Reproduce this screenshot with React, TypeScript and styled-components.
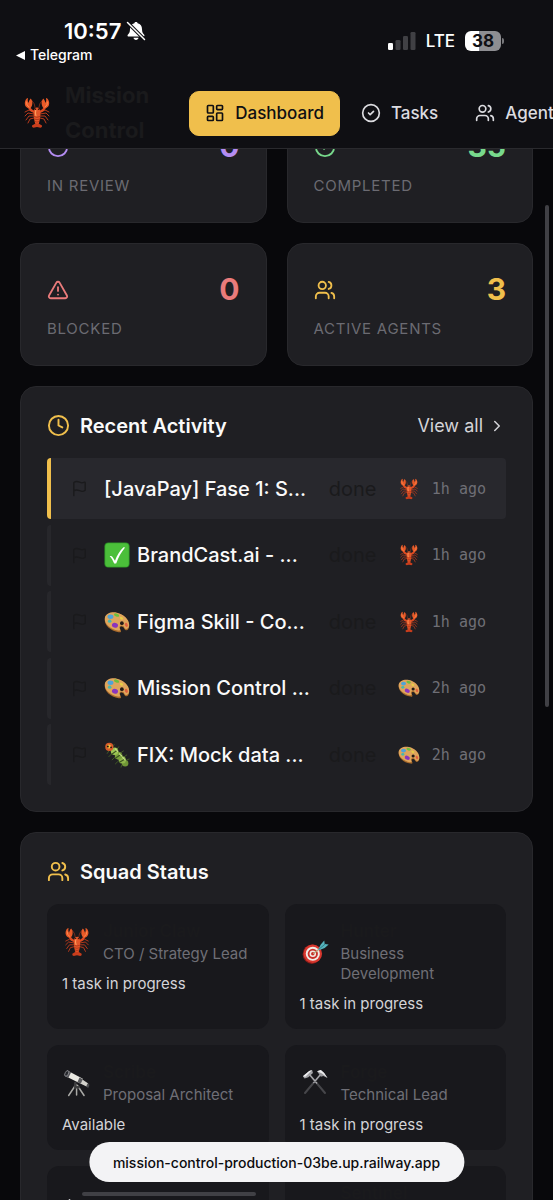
import React from "react";
import styled, { createGlobalStyle } from "styled-components";
import {
  ChevronRight,
  Circle,
  CircleCheck,
  Clock,
  Flag,
  LayoutDashboard,
  TriangleAlert,
  Users,
} from "lucide-react";

const GlobalStyle = createGlobalStyle`
  *, *::before, *::after { box-sizing: border-box; }
  body {
    margin: 0;
    background: #08080b;
    color: #fafafa;
    font-family: Inter, "Liberation Sans", sans-serif;
    -webkit-font-smoothing: antialiased;
  }
  h1, h2, h3, p, ul { margin: 0; padding: 0; }
  ul { list-style: none; }
  svg { display: block; flex: none; }
`;

const ink = "#1a1a1c";
const gold = "#f0bf4c";

/* ---------- shell ---------- */

const Shell = styled.div`
  height: 100vh;
  overflow: hidden;
`;

const Main = styled.main`
  display: flex;
  flex-direction: column;
  gap: 20px;
  padding: 100px 20px 0;
`;

const TopBar = styled.header`
  position: fixed;
  inset: 0 0 auto 0;
  z-index: 2;
  overflow: hidden;
  background: #0f0f13;
  border-bottom: 1px solid #2a2a2e;
`;

/* ---------- phone status bar ---------- */

const StatusBar = styled.div`
  display: flex;
  justify-content: space-between;
  height: 78px;
  padding: 17px 49px 0 16px;
  color: #fff;
`;

const StatusLeft = styled.div`
  display: flex;
  flex-direction: column;
`;

const TimeRow = styled.div`
  display: flex;
  align-items: center;
  gap: 5px;
  padding-left: 48px;
  font-size: 22px;
  font-weight: 600;
  line-height: 28px;
`;

const BackLink = styled.a`
  display: flex;
  align-items: center;
  gap: 5px;
  color: inherit;
  font-size: 14px;
  font-weight: 500;
  line-height: 20px;
  text-decoration: none;
`;

const StatusRight = styled.div`
  display: flex;
  align-items: center;
  gap: 10px;
  height: 48px;
  font-size: 17px;
  font-weight: 500;
`;

const Battery = styled.div`
  display: flex;
  align-items: center;
  gap: 1px;
`;

const BatteryBody = styled.div`
  width: 36px;
  height: 20px;
  border-radius: 6px;
  background: linear-gradient(to right, #fff 38%, #8e8e92 38%);
  color: #0f0f13;
  font-size: 17px;
  font-weight: 700;
  line-height: 20px;
  text-align: center;
`;

const BatteryTip = styled.div`
  width: 2px;
  height: 6px;
  border-radius: 0 2px 2px 0;
  background: #77777b;
`;

/* ---------- navigation ---------- */

const NavRow = styled.div`
  display: flex;
  align-items: center;
  gap: 40px;
  padding-left: 21px;
`;

const Brand = styled.div`
  display: flex;
  align-items: center;
  gap: 12px;
`;

const BrandName = styled.h1`
  width: min-content;
  color: ${ink};
  font-size: 22px;
  font-weight: 700;
  line-height: 35px;
`;

const Nav = styled.nav`
  display: flex;
  gap: 5px;
`;

const NavButton = styled.button<{ $active?: boolean }>`
  display: flex;
  align-items: center;
  gap: 10px;
  height: 45px;
  padding: 0 15px;
  border: 1px solid ${(p) => (p.$active ? gold : "transparent")};
  border-radius: 10px;
  background: ${(p) => (p.$active ? gold : "transparent")};
  color: ${(p) => (p.$active ? "#0f0f13" : "#dcdce0")};
  font: inherit;
  font-size: 17px;
  font-weight: 500;
  white-space: nowrap;
`;

/* ---------- cards ---------- */

const Card = styled.section`
  padding: 26px;
  border: 1px solid #28282c;
  border-radius: 16px;
  background: #1f1f23;
`;

const StatGrid = styled.div`
  display: grid;
  grid-template-columns: 1fr 1fr;
  gap: 20px;
`;

const StatTop = styled.div<{ $color: string }>`
  display: flex;
  align-items: center;
  justify-content: space-between;
  margin-bottom: 10px;
  color: ${(p) => p.$color};
`;

const StatValue = styled.span`
  font-size: 30px;
  font-weight: 700;
  line-height: 39px;
`;

const StatLabel = styled.p`
  color: #6b6b72;
  font-size: 15px;
  letter-spacing: 0.05em;
  line-height: 20px;
  text-transform: uppercase;
`;

const CardHeader = styled.div`
  display: flex;
  align-items: center;
  gap: 10px;
  height: 25px;
  margin-bottom: 20px;
  color: ${gold};
`;

const CardTitle = styled.h2`
  flex: 1;
  color: #fafafa;
  font-size: 20px;
  font-weight: 600;
`;

const ViewAll = styled.a`
  display: flex;
  align-items: center;
  gap: 5px;
  color: #d4d4d8;
  font-size: 18px;
  text-decoration: none;
`;

/* ---------- activity ---------- */

const ActivityList = styled.ul`
  display: flex;
  flex-direction: column;
  justify-content: space-between;
  min-height: 327px;
`;

const ActivityRow = styled.li<{ $active?: boolean }>`
  display: flex;
  align-items: center;
  gap: 16px;
  height: 61px;
  padding: 0 20px;
  border-left: 4px solid ${(p) => (p.$active ? gold : "#27272b")};
  border-radius: 4px;
  background: ${(p) => (p.$active ? "#28282d" : "transparent")};
  color: ${ink};
`;

const ActivityTitle = styled.h3`
  display: flex;
  flex: 1;
  align-items: center;
  gap: 7px;
  min-width: 0;
  overflow: hidden;
  color: #fafafa;
  font-size: 20px;
  font-weight: 500;
  white-space: nowrap;
`;

const ActivityState = styled.span`
  width: 53px;
  font-size: 20px;
`;

const ActivityMeta = styled.div`
  display: flex;
  align-items: center;
  gap: 12px;
`;

const Ago = styled.span`
  color: #6f6f76;
  font-family: "DejaVu Sans Mono", monospace;
  font-size: 15px;
`;

/* ---------- squad ---------- */

const SquadGrid = styled.div`
  display: grid;
  grid-template-columns: 1fr 1fr;
  gap: 16px;
`;

const Member = styled.article`
  min-height: 105px;
  padding: 15px;
  border-radius: 12px;
  background: #18181c;
`;

const MemberTop = styled.div`
  display: flex;
  align-items: center;
  gap: 11px;
  min-height: 45px;
  margin-bottom: 10px;
`;

const MemberName = styled.h3`
  min-height: 25px;
  color: ${ink};
  font-size: 17px;
  font-weight: 600;
  line-height: 25px;
`;

const MemberRole = styled.p`
  min-height: 20px;
  color: #6f6f76;
  font-size: 15px;
  line-height: 20px;
`;

const MemberState = styled.p`
  color: #d4d4d8;
  font-size: 15px;
  line-height: 20px;
`;

/* ---------- overlays ---------- */

const AddressPill = styled.button`
  position: fixed;
  bottom: 18px;
  left: 50%;
  z-index: 3;
  height: 40px;
  padding: 0 24px;
  border: 0;
  border-radius: 20px;
  background: #f3f3f5;
  color: #0c0c0e;
  font: inherit;
  font-size: 14px;
  font-weight: 500;
  white-space: nowrap;
  transform: translateX(-50%);
`;

const ScrollThumb = styled.div<{ $axis: "x" | "y" }>`
  position: fixed;
  z-index: 1;
  border-radius: 2px;
  background: #404045;
  ${(p) =>
    p.$axis === "y"
      ? "right: 4px; top: 205px; width: 4px; height: 502px;"
      : "left: 82px; bottom: 4px; width: 174px; height: 4px;"}
`;

/* ---------- drawings ---------- */

type Size = { size: number };

const Lobster = ({ size }: Size) => (
  <svg width={size} height={size} viewBox="0 0 32 32" aria-hidden="true">
    <g fill="none" stroke="#b93a1c" strokeWidth="1" strokeLinecap="round">
      <path d="M13 15 8 13 4 15M13 17l-6-1-3 3M13 19l-5 0-3 4M13 21l-4 1-2 4" />
      <path d="m19 15 5-2 4 2M19 17l6-1 3 3M19 19l5 0 3 4M19 21l4 1 2 4" />
      <path d="M14.500 12Q14 6 10.500 3M17.500 12Q18 6 21.500 3" strokeWidth=".6" />
    </g>
    <path d="M14 15Q9 14 8 9.500M18 15q5-1 6-5.500" fill="none" stroke="#dc4a22" strokeWidth="2.400" strokeLinecap="round" />
    <path d="M8.500 11.500C4.500 11 3 7.500 4.200 4 4.800 2 6 1 7 1c-.4 2-.3 3.500.5 5C8 4.500 8.500 2.500 9.800 1.500c1.600 2 2 5 1.200 7-.5 1.500-1.200 2.700-2.500 3Z" fill="#e85a28" />
    <path d="M23.500 11.500c4-.5 5.500-4 4.300-7.500-.6-2-1.800-3-2.800-3 .4 2 .3 3.500-.5 5-.5-1.500-1-3.500-2.300-4.500-1.600 2-2 5-1.200 7 .5 1.500 1.200 2.700 2.500 3Z" fill="#e85a28" />
    <path d="M5.500 5q-.4 3.500 2.500 5M26.500 5q.4 3.500-2.500 5" fill="none" stroke="#ff9154" strokeWidth=".9" strokeLinecap="round" />
    <path d="M16 10.500c2 0 3.400 2.500 3.400 6 0 4-1 8.500-1.900 11h-3c-.9-2.500-1.900-7-1.900-11 0-3.500 1.400-6 3.400-6Z" fill="#e4572a" />
    <path d="M14.800 13q-.9 3 .2 6" fill="none" stroke="#ff9c5c" strokeWidth="1.200" strokeLinecap="round" />
    <path d="M13 19.500q3 1.500 6 0M13.200 22q2.800 1.400 5.600 0M13.800 24.500q2.200 1.200 4.400 0" fill="none" stroke="#a92f15" strokeWidth=".8" />
    <path d="M14.500 26.500 11 28.500q-.5 2 1.500 2.300L16 30l3.500.8q2-.3 1.500-2.300l-3.500-2Z" fill="#c83d1c" />
    <circle cx="14.500" cy="12.300" r=".7" fill="#2a0d08" />
    <circle cx="17.500" cy="12.300" r=".7" fill="#2a0d08" />
  </svg>
);

const Palette = ({ size }: Size) => (
  <svg width={size} height={size} viewBox="0 0 32 32" aria-hidden="true">
    <path d="M1 12C2 6 9 3.500 16 5c8 1.700 15 8.500 15 15.500 0 3.500-1.800 6-4 5.500-2.400-.6-2-4-4.800-4.300-3-.2-3 2.300-1.600 4.300 1.200 1.800-.1 3-2.600 2.500C8 27 0 20 1 12Z" fill="#a86a2c" />
    <path d="M1 11C2 5.500 9 3 16 4.500c8 1.700 15 8 15 15 0 3.500-1.800 5.500-4 5-2.400-.6-2-4-4.800-4.300-3-.2-4 2.300-2.600 4.300.9 1.500-.1 2.500-2.600 2C9 25 0 19 1 11Z" fill="#dfa55c" />
    <circle cx="22" cy="17.500" r="2.300" fill="#241a16" />
    <ellipse cx="8" cy="9.500" rx="3.600" ry="2.700" fill="#4fa3d8" />
    <ellipse cx="15.500" cy="7.500" rx="3.300" ry="1.900" transform="rotate(18 15.500 7.500)" fill="#6cbf3c" />
    <ellipse cx="21.500" cy="11.500" rx="2.200" ry="1.500" transform="rotate(35 21.500 11.500)" fill="#e6cf45" />
    <ellipse cx="7" cy="15" rx="2.200" ry="2" fill="#46b8ad" />
    <ellipse cx="13.500" cy="20" rx="3.800" ry="2.900" transform="rotate(20 13.500 20)" fill="#8a35bd" />
    <ellipse cx="27.500" cy="19.500" rx="1.700" ry="2.600" transform="rotate(-25 27.500 19.500)" fill="#e2603f" />
  </svg>
);

const CheckTile = ({ size }: Size) => (
  <svg width={size} height={size} viewBox="0 0 32 32" aria-hidden="true">
    <rect x=".5" y=".5" width="31" height="31" rx="5" fill="#2c9426" />
    <rect x="1.500" y="1.500" width="29" height="29" rx="4.500" fill="#4bbf3a" />
    <path d="M7 17.500c1.500-.8 2.700-.2 3.500 1l3 4.500C16 16.500 19.500 10.500 24 6.500l2 .2C21 12.500 17.500 19 15 26.500h-2.500C11 23 9.500 20 7 17.500Z" fill="#fff" />
  </svg>
);

const Caterpillar = ({ size }: Size) => (
  <svg width={size} height={size} viewBox="0 0 32 32" aria-hidden="true">
    <g stroke="#4d6e28" strokeWidth=".9" strokeLinecap="round">
      <path d="m11 6 1.500-3M16 9l2-3M21 13l3-2M25 18l3-2M28 22l3-1" />
      <path d="m6 11-2 3M9 15l-3 3M13 19l-3 3M17 24l-3 3M22 28l-1 3" />
    </g>
    <circle cx="26" cy="26" r="4" fill="#6f9636" />
    <circle cx="22.500" cy="22" r="4.500" fill="#8db54a" />
    <circle cx="18" cy="17" r="4.700" fill="#7ba23c" />
    <circle cx="13" cy="11.500" r="4.600" fill="#9cc455" />
    <path d="m14 20 7-5M19 25l7-4M9.500 15l7-5" stroke="#3b5420" strokeWidth="1.400" strokeLinecap="round" />
    <path d="m19 14.500 3 3M14 8.500l3 3M23 19l3 3" stroke="#cbe58b" strokeWidth="1.400" strokeLinecap="round" />
    <circle cx="6.500" cy="6" r="5" fill="#d75b2a" />
    <circle cx="6" cy="5.500" r="2.500" fill="#f3bf3d" />
    <circle cx="4.700" cy="5.500" r="1.200" fill="#1c120c" />
    <circle cx="8.700" cy="6.500" r="1.100" fill="#1c120c" />
  </svg>
);

const Target = ({ size }: Size) => (
  <svg width={size} height={size} viewBox="-1 -1 34 34" aria-hidden="true">
    <ellipse cx="12.500" cy="18.500" rx="10.500" ry="11" fill="#8f1d1a" />
    <ellipse cx="13.500" cy="18" rx="10.500" ry="10.500" fill="#d8372e" />
    <ellipse cx="13.500" cy="18" rx="8" ry="8" fill="#f1ebe6" />
    <ellipse cx="13.500" cy="18" rx="5.800" ry="5.800" fill="#c92f28" />
    <ellipse cx="13.500" cy="18" rx="3.700" ry="3.700" fill="#f1ebe6" />
    <circle cx="13.500" cy="18" r="2" fill="#c92f28" />
    <path d="m14 18 10-8" stroke="#b7a37a" strokeWidth="1.300" />
    <path d="m19.500 13.500 3-6L26.500 3l.5 4 4.500.5-4.500 4-6.500 2.500Z" fill="#55b3bd" />
    <path d="m20.500 12.800 7-5.800" stroke="#2c7580" strokeWidth="1" />
  </svg>
);

const Telescope = ({ size }: Size) => (
  <svg width={size} height={size} viewBox="-2 -2 36 36" aria-hidden="true">
    <g strokeLinecap="round" fill="none">
      <path d="m14 19-8 12M16.500 19l8 12M15.500 18v12.500" stroke="#a9a9a6" strokeWidth="1.800" />
      <path d="M14 16v5h4" stroke="#3e3e40" strokeWidth="3" />
    </g>
    <path d="M5.500 1.500 23 11l-2.500 6L2.500 8Z" fill="#e9e8e2" />
    <path d="m22 11.500 7.500 5-1.500 4-8-4Z" fill="#d2d1cb" />
    <path d="m28.500 16.500 2.500 1.500-1.500 4-2.500-1.500Z" fill="#4c4c4f" />
    <path d="m19 9.500 4 2-2.500 5.500-4-2Z" fill="#5a5a5d" />
    <path d="m4.500 1 4.500 2-3.500 7-4.500-2.500Z" fill="#55555a" />
    <ellipse cx="3.700" cy="4.500" rx="2" ry="3.700" transform="rotate(28 3.700 4.500)" fill="#26282d" stroke="#a3a3a8" strokeWidth=".8" />
  </svg>
);

const Hammers = ({ size }: Size) => (
  <svg width={size} height={size} viewBox="-2 -1 36 36" aria-hidden="true">
    <path d="M10 7.500 28 29M22 7.500 4 29" stroke="#46464a" strokeWidth="2.400" strokeLinecap="round" />
    <path d="m10 7.500 8 9.500M22 7.500 14.500 16.500" stroke="#aaaaae" strokeWidth="1.600" strokeLinecap="round" />
    <path d="M1.500 9 9 2.500l3.500-1L13.500 5l-5.500 5-4.500 1.500Z" fill="#a4a4a8" />
    <path d="m1.500 9 7.500-6.500 3.500-1-8 8Z" fill="#efeff1" />
    <path d="m18.500 3 4.500-1.500L27 5l4 6-5-2.500-3 1Z" fill="#98989c" />
    <path d="m18.500 3 4.500-1.500L27 5l4 6-6.500-5.500Z" fill="#ececee" />
  </svg>
);

const Pen = ({ size }: Size) => (
  <svg width={size} height={size} viewBox="0 0 32 32" aria-hidden="true">
    <path d="M7 11.500q1-1.500 2 0L10.500 28 8 31Z" fill="#d8d8da" />
  </svg>
);

const Blank = ({ size }: Size) => <svg width={size} height={size} aria-hidden="true" />;

const MutedBell = () => (
  <svg width="20" height="20" viewBox="0 0 20 20" aria-label="Notifications muted">
    <path d="M10 1c.9 0 1.500.5 1.600 1.200C14.500 3 16 5 16 8c0 3.500 1 4.300 2.200 5.700.6.800.2 1.800-.9 1.800H2.700c-1.100 0-1.500-1-.9-1.800C3 12.300 4 11.500 4 8c0-3 1.500-5 4.400-5.800C8.500 1.500 9.100 1 10 1ZM7.500 16.700h5c-.2 1.300-1.200 2.200-2.500 2.200s-2.300-.9-2.500-2.200Z" fill="#fff" />
    <path d="m1.500 1.500 17 17" stroke="#0f0f13" strokeWidth="3.600" />
    <path d="m1.500 1.500 17 17" stroke="#fff" strokeWidth="1.500" strokeLinecap="round" />
  </svg>
);

const Signal = () => (
  <svg width="28" height="18" viewBox="0 0 28 18" aria-label="Signal strength">
    <rect x="0" y="11" width="5" height="7" rx="1.300" fill="#fff" />
    <rect x="7.500" y="8" width="5" height="10" rx="1.300" fill="#404044" />
    <rect x="15" y="4" width="5" height="14" rx="1.300" fill="#404044" />
    <rect x="22.500" y="0" width="5" height="18" rx="1.300" fill="#404044" />
  </svg>
);

/* ---------- data ---------- */

const stats = [
  { label: "In Review", value: 0, color: "#b48cf2", Icon: Circle },
  { label: "Completed", value: 35, color: "#78d98c", Icon: CircleCheck },
  { label: "Blocked", value: 0, color: "#ea7b7b", Icon: TriangleAlert },
  { label: "Active Agents", value: 3, color: gold, Icon: Users },
];

const activity = [
  { title: "[JavaPay] Fase 1: S...", Mark: null, Avatar: Lobster, ago: "1h ago" },
  { title: "BrandCast.ai - ...", Mark: CheckTile, Avatar: Lobster, ago: "1h ago" },
  { title: "Figma Skill - Co...", Mark: Palette, Avatar: Lobster, ago: "1h ago" },
  { title: "Mission Control ...", Mark: Palette, Avatar: Palette, ago: "2h ago" },
  { title: "FIX: Mock data ...", Mark: Caterpillar, Avatar: Palette, ago: "2h ago" },
];

const squad = [
  { name: "Junior Claw", role: "CTO / Strategy Lead", state: "1 task in progress", Avatar: Lobster },
  { name: "Hunter", role: "Business Development", state: "1 task in progress", Avatar: Target },
  { name: "Scribe", role: "Proposal Architect", state: "Available", Avatar: Telescope },
  { name: "Forge", role: "Technical Lead", state: "1 task in progress", Avatar: Hammers },
  { name: "", role: "", state: "", Avatar: Pen },
  { name: "Sentinel", role: "", state: "", Avatar: Blank },
];

export default function App() {
  return (
    <Shell>
      <GlobalStyle />
      <TopBar>
        <StatusBar>
          <StatusLeft>
            <TimeRow>
              10:57
              <MutedBell />
            </TimeRow>
            <BackLink href="#telegram">
              <svg width="9" height="9" viewBox="0 0 9 9" aria-hidden="true">
                <path d="M0 4.500 9 0v9Z" fill="#fff" />
              </svg>
              Telegram
            </BackLink>
          </StatusLeft>
          <StatusRight>
            <Signal />
            LTE
            <Battery>
              <BatteryBody>38</BatteryBody>
              <BatteryTip />
            </Battery>
          </StatusRight>
        </StatusBar>
        <NavRow>
          <Brand>
            <Lobster size={32} />
            <BrandName>Mission Control</BrandName>
          </Brand>
          <Nav>
            <NavButton $active>
              <LayoutDashboard size={20} strokeWidth={2} />
              Dashboard
            </NavButton>
            <NavButton>
              <CircleCheck size={20} strokeWidth={2} />
              Tasks
            </NavButton>
            <NavButton>
              <Users size={20} strokeWidth={2} />
              Agents
            </NavButton>
          </Nav>
        </NavRow>
      </TopBar>

      <Main>
        <StatGrid>
          {stats.map(({ label, value, color, Icon }) => (
            <Card key={label}>
              <StatTop $color={color}>
                <Icon size={22} strokeWidth={2} />
                <StatValue>{value}</StatValue>
              </StatTop>
              <StatLabel>{label}</StatLabel>
            </Card>
          ))}
        </StatGrid>

        <Card>
          <CardHeader>
            <Clock size={23} />
            <CardTitle>Recent Activity</CardTitle>
            <ViewAll href="#activity">
              View all
              <ChevronRight size={18} />
            </ViewAll>
          </CardHeader>
          <ActivityList>
            {activity.map(({ title, Mark, Avatar, ago }, i) => (
              <ActivityRow key={title} $active={i === 0}>
                <Flag size={17} strokeWidth={2} />
                <ActivityTitle>
                  {Mark && <Mark size={26} />}
                  {title}
                </ActivityTitle>
                <ActivityState>done</ActivityState>
                <ActivityMeta>
                  <Avatar size={22} />
                  <Ago>{ago}</Ago>
                </ActivityMeta>
              </ActivityRow>
            ))}
          </ActivityList>
        </Card>

        <Card>
          <CardHeader>
            <Users size={23} />
            <CardTitle>Squad Status</CardTitle>
          </CardHeader>
          <SquadGrid>
            {squad.map(({ name, role, state, Avatar }, i) => (
              <Member key={i}>
                <MemberTop>
                  <Avatar size={30} />
                  <div>
                    <MemberName>{name}</MemberName>
                    <MemberRole>{role}</MemberRole>
                  </div>
                </MemberTop>
                <MemberState>{state}</MemberState>
              </Member>
            ))}
          </SquadGrid>
        </Card>
      </Main>

      <ScrollThumb $axis="y" />
      <ScrollThumb $axis="x" />
      <AddressPill>mission-control-production-03be.up.railway.app</AddressPill>
    </Shell>
  );
}
